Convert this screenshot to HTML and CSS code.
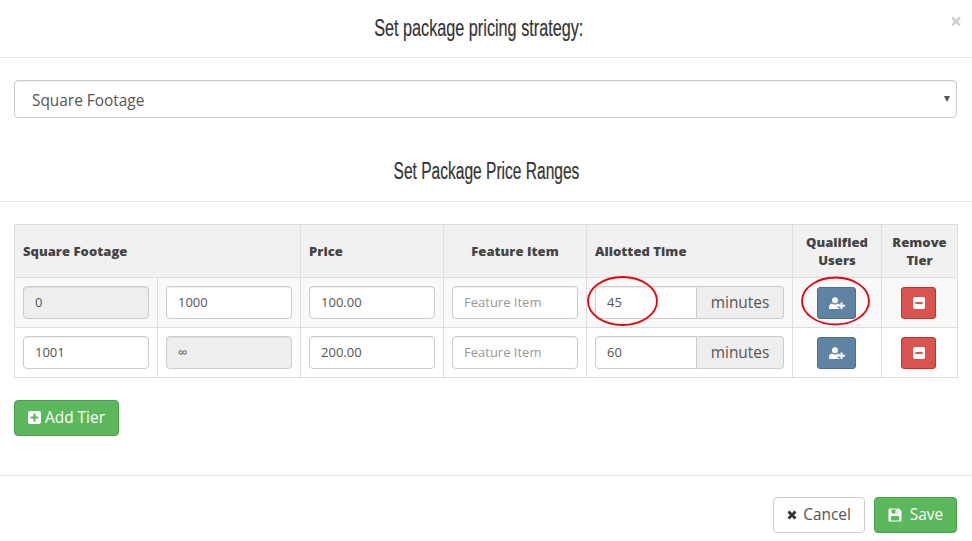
FILE: index.html
```html
<!DOCTYPE html>
<html lang="en">
<head>
<meta charset="utf-8">
<title>Set package pricing strategy</title>
<link rel="stylesheet" href="styles.css">
</head>
<body>
<div class="modal">
  <header class="modal-header">
    <h3 class="title">Set package pricing strategy:</h3>
    <span class="close">×</span>
  </header>
  <div class="strategy">
    <div class="select-wrap">
      <select class="control select"><option>Square Footage</option></select>
      <span class="caret"></span>
    </div>
  </div>
  <div class="subtitle-row"><h4 class="subtitle">Set Package Price Ranges</h4></div>
  <div class="tiers">
    <table class="tier-table">
      <colgroup>
        <col class="c-range"><col class="c-range"><col class="c-price"><col class="c-feature"><col class="c-time"><col class="c-users"><col class="c-remove">
      </colgroup>
      <thead>
        <tr>
          <th colspan="2">Square Footage</th>
          <th>Price</th>
          <th class="center">Feature Item</th>
          <th>Allotted Time</th>
          <th class="center">Qualified Users</th>
          <th class="center">Remove Tier</th>
        </tr>
      </thead>
      <tbody>
        <tr class="odd">
          <td><input class="control disabled" value="0" readonly></td>
          <td><input class="control" value="1000"></td>
          <td><input class="control" value="100.00"></td>
          <td><input class="control" placeholder="Feature Item"></td>
          <td><div class="group"><input class="control" value="45"><span class="addon">minutes</span></div></td>
          <td class="center"><button class="btn-icon blue"><svg class="ico-user" viewBox="0 0 16 12"><circle cx="6" cy="3.2" r="3"/><path d="M0 12V9.6C0 7.6 1.6 6.6 3.2 6.4 4 7.2 5 7.6 6 7.6s2-.4 2.8-1.2c.6.1 1.2.3 1.7.6V8.5H8.6v2.4h1.9V12Z"/><path d="M11.5 5.5h2v2.2H16v2h-2.5V12h-2V9.7H9.2v-2h2.3Z"/></svg></button></td>
          <td class="center"><button class="btn-icon red"><svg class="ico-sq" viewBox="0 0 12 12"><path fill-rule="evenodd" d="M2 0h8a2 2 0 0 1 2 2v8a2 2 0 0 1-2 2H2a2 2 0 0 1-2-2V2a2 2 0 0 1 2-2ZM2.4 5v2h7.2V5Z"/></svg></button></td>
        </tr>
        <tr>
          <td><input class="control" value="1001"></td>
          <td><input class="control disabled" value="∞" readonly></td>
          <td><input class="control" value="200.00"></td>
          <td><input class="control" placeholder="Feature Item"></td>
          <td><div class="group"><input class="control" value="60"><span class="addon">minutes</span></div></td>
          <td class="center"><button class="btn-icon blue"><svg class="ico-user" viewBox="0 0 16 12"><circle cx="6" cy="3.2" r="3"/><path d="M0 12V9.6C0 7.6 1.6 6.6 3.2 6.4 4 7.2 5 7.6 6 7.6s2-.4 2.8-1.2c.6.1 1.2.3 1.7.6V8.5H8.6v2.4h1.9V12Z"/><path d="M11.5 5.5h2v2.2H16v2h-2.5V12h-2V9.7H9.2v-2h2.3Z"/></svg></button></td>
          <td class="center"><button class="btn-icon red"><svg class="ico-sq" viewBox="0 0 12 12"><path fill-rule="evenodd" d="M2 0h8a2 2 0 0 1 2 2v8a2 2 0 0 1-2 2H2a2 2 0 0 1-2-2V2a2 2 0 0 1 2-2ZM2.4 5v2h7.2V5Z"/></svg></button></td>
        </tr>
      </tbody>
    </table>
    <button class="btn green add-tier"><svg class="ico-sq-lg" viewBox="0 0 12 12"><path fill-rule="evenodd" d="M2 0h8a2 2 0 0 1 2 2v8a2 2 0 0 1-2 2H2a2 2 0 0 1-2-2V2a2 2 0 0 1 2-2ZM5 2.4V5H2.4v2H5v2.6h2V7h2.6V5H7V2.4Z"/></svg>Add Tier</button>
  </div>
  <footer class="modal-footer">
    <button class="btn white"><svg class="ico-x" viewBox="0 0 12 12"><path d="M3 .6 6 3.6 9 .6 11.4 3 8.4 6l3 3L9 11.4l-3-3-3 3L.6 9l3-3-3-3Z"/></svg>Cancel</button>
    <button class="btn green save"><svg class="ico-save" viewBox="0 0 14 14"><path fill-rule="evenodd" d="M1.5 0.5H11L13.5 3V12.5a1 1 0 0 1-1 1H1.5a1 1 0 0 1-1-1V1.5a1 1 0 0 1 1-1ZM3.5 1.5V5.5H9.5V1.5ZM7.5 2H9V5H7.5ZM3 8V12.5H11V8Z"/></svg>Save</button>
  </footer>
  <svg class="marks" viewBox="0 0 972 541" aria-hidden="true">
    <ellipse class="mark" cx="622.5" cy="301" rx="34.5" ry="24"/>
    <ellipse class="mark" cx="835.5" cy="301" rx="33.5" ry="23.5"/>
  </svg>
</div>
</body>
</html>
```
FILE: styles.css
```css
* { box-sizing: border-box; }
html, body { margin: 0; height: 100%; background: #fff; overflow: hidden; }
body { font-family: "Open Sans", sans-serif; font-size: 14px; color: #555; }
.modal { position: relative; width: 972px; height: 541px; }

.modal-header {
  position: relative;
  height: 58px;
  padding-right: 14px;
  border-bottom: 1px solid #e5e5e5;
  display: flex;
  align-items: center;
  justify-content: center;
}
.title, .subtitle {
  margin: 0;
  font-family: "Liberation Sans", sans-serif;
  font-weight: 400;
  color: #333;
  text-align: center;
  white-space: nowrap;
  -webkit-text-stroke: .2px #333;
}
.title { font-size: 24px; line-height: 24px; transform: scaleX(.676); position: relative; top: -1px; }
.close {
  position: absolute;
  right: 10px;
  top: 9px;
  font-size: 21px;
  line-height: 24px;
  font-weight: 700;
  color: #000;
  opacity: .2;
}

.strategy { padding: 22px 15px 0 14px; }
.select-wrap { position: relative; }
.control {
  display: block;
  width: 100%;
  height: 33px;
  padding: 5px 12px 7px 11px;
  font-family: "Open Sans", sans-serif;
  font-size: 13px;
  color: #555;
  background: #fff;
  border: 1px solid #ccc;
  border-radius: 4px;
  box-shadow: inset 0 1px 1px rgba(0,0,0,.075);
  outline: none;
}
.control::placeholder { color: #999; opacity: 1; }
.control.disabled { background: #eee; }
.select {
  height: 38px;
  padding: 7px 17px 5px;
  font-size: 15.4px;
  appearance: none;
  -webkit-appearance: none;
}
.caret {
  position: absolute;
  right: 7px;
  top: 16px;
  border-left: 3px solid transparent;
  border-right: 3px solid transparent;
  border-top: 6px solid #555;
}

.subtitle-row {
  margin-top: 41px;
  height: 43px;
  padding-bottom: 18px;
  border-bottom: 1px solid #e5e5e5;
  display: flex;
  justify-content: center;
}
.subtitle { font-size: 23px; line-height: 24px; transform: scaleX(.676); }

.tiers { padding: 22px 15px 0 14px; }
.tier-table {
  width: 943px;
  table-layout: fixed;
  border-collapse: collapse;
  border: 1px solid #ddd;
}
.c-range, .c-price, .c-feature { width: 143px; }
.c-time { width: 206px; }
.c-users { width: 89px; }
.c-remove { width: 76px; }
.tier-table th, .tier-table td {
  border: 1px solid #ddd;
  padding: 8px;
  vertical-align: middle;
}
.tier-table th {
  height: 53px;
  background: #f1f1f1;
  font-size: 13px;
  letter-spacing: .05px;
  line-height: 18px;
  font-weight: 800;
  color: #444;
  text-align: left;
}
.tier-table th.center, .tier-table td.center { text-align: center; }
.tier-table td { height: 50px; }
.odd td { background: #f9f9f9; }

.group { display: flex; }
.group .control {
  flex: 1;
  min-width: 0;
  border-radius: 4px 0 0 4px;
}
.addon {
  width: 87px;
  flex: none;
  height: 33px;
  display: flex;
  align-items: center;
  justify-content: center;
  font-size: 15.4px;
  color: #555;
  background: #eee;
  border: 1px solid #ccc;
  border-left: 0;
  border-radius: 0 4px 4px 0;
}

.btn-icon {
  height: 32px;
  padding: 0;
  border-radius: 3px;
  border: 1px solid;
  display: inline-flex;
  align-items: center;
  justify-content: center;
  vertical-align: top;
}
.blue { width: 39px; margin-left: -1px; background: #5f83a3; border-color: #4e6f8c; }
.red { width: 35px; margin-left: -2px; background: #d9534f; border-color: #c0322e; }
.ico-user { width: 16px; height: 12px; fill: #fff; }
.ico-sq { width: 12px; height: 12px; fill: #fff; }

.btn {
  display: inline-flex;
  align-items: center;
  justify-content: center;
  height: 36px;
  font-family: "Open Sans", sans-serif;
  font-size: 15.4px;
  border-radius: 4px;
  border: 1px solid;
  padding: 0 0 2px;
}
.green { background: #5cb85c; border-color: #4a9d4a; color: #fff; }
.white { background: #fff; border-color: #ccc; color: #555; width: 92px; }
.add-tier { width: 105px; margin-top: 22px; }
.save { width: 83px; }
.ico-sq-lg { width: 13px; height: 13px; fill: #fff; margin: 1px 4px 0 0; }
.ico-x { width: 10px; height: 10px; fill: #333; margin: 2px 6px 0 0; }
.ico-save { width: 14px; height: 14px; fill: #fff; margin: 1px 8px 0 0; }

.modal-footer {
  position: absolute;
  left: 0;
  right: 0;
  top: 475px;
  border-top: 1px solid #e5e5e5;
  padding: 21px 15px 0 0;
  display: flex;
  justify-content: flex-end;
  gap: 9px;
}

.marks { position: absolute; inset: 0; width: 972px; height: 541px; pointer-events: none; }
.mark { fill: none; stroke: #e8000a; stroke-width: 1.8; }
```
